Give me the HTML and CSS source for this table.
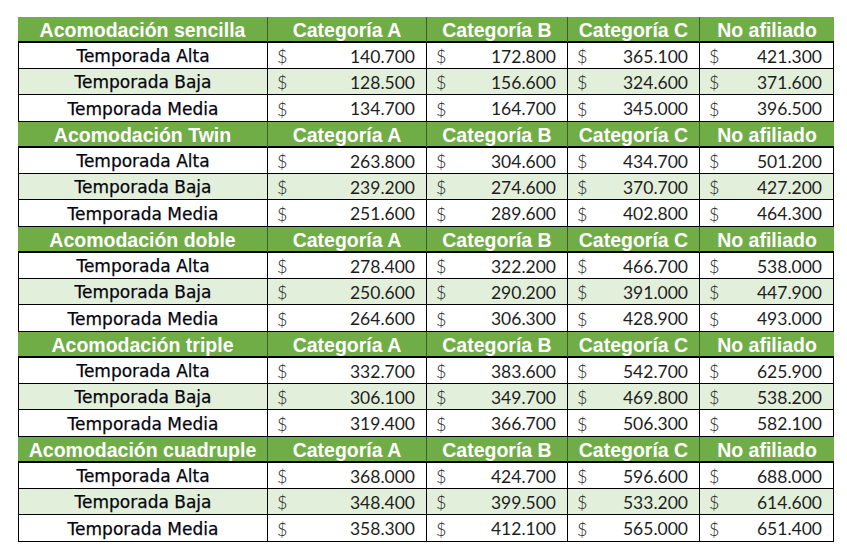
FILE: index.html
```html
<!DOCTYPE html>
<html lang="es">
<head>
<meta charset="utf-8">
<title>Tarifas de acomodación</title>
<link rel="stylesheet" href="styles.css">
</head>
<body>
<div class="sheet">
  <section class="group">
    <div class="row head"><div class="c">Acomodación sencilla</div><div class="c">Categoría A</div><div class="c">Categoría B</div><div class="c">Categoría C</div><div class="c">No afiliado</div></div>
    <div class="row"><div class="c label">Temporada Alta</div><div class="c money"><span class="cur">$</span><span>140.700</span></div><div class="c money"><span class="cur">$</span><span>172.800</span></div><div class="c money"><span class="cur">$</span><span>365.100</span></div><div class="c money"><span class="cur">$</span><span>421.300</span></div></div>
    <div class="row alt"><div class="c label">Temporada Baja</div><div class="c money"><span class="cur">$</span><span>128.500</span></div><div class="c money"><span class="cur">$</span><span>156.600</span></div><div class="c money"><span class="cur">$</span><span>324.600</span></div><div class="c money"><span class="cur">$</span><span>371.600</span></div></div>
    <div class="row tall"><div class="c label">Temporada Media</div><div class="c money"><span class="cur">$</span><span>134.700</span></div><div class="c money"><span class="cur">$</span><span>164.700</span></div><div class="c money"><span class="cur">$</span><span>345.000</span></div><div class="c money"><span class="cur">$</span><span>396.500</span></div></div>
  </section>
  <section class="group">
    <div class="row head"><div class="c">Acomodación Twin</div><div class="c">Categoría A</div><div class="c">Categoría B</div><div class="c">Categoría C</div><div class="c">No afiliado</div></div>
    <div class="row"><div class="c label">Temporada Alta</div><div class="c money"><span class="cur">$</span><span>263.800</span></div><div class="c money"><span class="cur">$</span><span>304.600</span></div><div class="c money"><span class="cur">$</span><span>434.700</span></div><div class="c money"><span class="cur">$</span><span>501.200</span></div></div>
    <div class="row alt"><div class="c label">Temporada Baja</div><div class="c money"><span class="cur">$</span><span>239.200</span></div><div class="c money"><span class="cur">$</span><span>274.600</span></div><div class="c money"><span class="cur">$</span><span>370.700</span></div><div class="c money"><span class="cur">$</span><span>427.200</span></div></div>
    <div class="row tall"><div class="c label">Temporada Media</div><div class="c money"><span class="cur">$</span><span>251.600</span></div><div class="c money"><span class="cur">$</span><span>289.600</span></div><div class="c money"><span class="cur">$</span><span>402.800</span></div><div class="c money"><span class="cur">$</span><span>464.300</span></div></div>
  </section>
  <section class="group">
    <div class="row head"><div class="c">Acomodación doble</div><div class="c">Categoría A</div><div class="c">Categoría B</div><div class="c">Categoría C</div><div class="c">No afiliado</div></div>
    <div class="row"><div class="c label">Temporada Alta</div><div class="c money"><span class="cur">$</span><span>278.400</span></div><div class="c money"><span class="cur">$</span><span>322.200</span></div><div class="c money"><span class="cur">$</span><span>466.700</span></div><div class="c money"><span class="cur">$</span><span>538.000</span></div></div>
    <div class="row alt"><div class="c label">Temporada Baja</div><div class="c money"><span class="cur">$</span><span>250.600</span></div><div class="c money"><span class="cur">$</span><span>290.200</span></div><div class="c money"><span class="cur">$</span><span>391.000</span></div><div class="c money"><span class="cur">$</span><span>447.900</span></div></div>
    <div class="row tall"><div class="c label">Temporada Media</div><div class="c money"><span class="cur">$</span><span>264.600</span></div><div class="c money"><span class="cur">$</span><span>306.300</span></div><div class="c money"><span class="cur">$</span><span>428.900</span></div><div class="c money"><span class="cur">$</span><span>493.000</span></div></div>
  </section>
  <section class="group">
    <div class="row head"><div class="c">Acomodación triple</div><div class="c">Categoría A</div><div class="c">Categoría B</div><div class="c">Categoría C</div><div class="c">No afiliado</div></div>
    <div class="row"><div class="c label">Temporada Alta</div><div class="c money"><span class="cur">$</span><span>332.700</span></div><div class="c money"><span class="cur">$</span><span>383.600</span></div><div class="c money"><span class="cur">$</span><span>542.700</span></div><div class="c money"><span class="cur">$</span><span>625.900</span></div></div>
    <div class="row alt"><div class="c label">Temporada Baja</div><div class="c money"><span class="cur">$</span><span>306.100</span></div><div class="c money"><span class="cur">$</span><span>349.700</span></div><div class="c money"><span class="cur">$</span><span>469.800</span></div><div class="c money"><span class="cur">$</span><span>538.200</span></div></div>
    <div class="row tall"><div class="c label">Temporada Media</div><div class="c money"><span class="cur">$</span><span>319.400</span></div><div class="c money"><span class="cur">$</span><span>366.700</span></div><div class="c money"><span class="cur">$</span><span>506.300</span></div><div class="c money"><span class="cur">$</span><span>582.100</span></div></div>
  </section>
  <section class="group">
    <div class="row head"><div class="c">Acomodación cuadruple</div><div class="c">Categoría A</div><div class="c">Categoría B</div><div class="c">Categoría C</div><div class="c">No afiliado</div></div>
    <div class="row"><div class="c label">Temporada Alta</div><div class="c money"><span class="cur">$</span><span>368.000</span></div><div class="c money"><span class="cur">$</span><span>424.700</span></div><div class="c money"><span class="cur">$</span><span>596.600</span></div><div class="c money"><span class="cur">$</span><span>688.000</span></div></div>
    <div class="row alt"><div class="c label">Temporada Baja</div><div class="c money"><span class="cur">$</span><span>348.400</span></div><div class="c money"><span class="cur">$</span><span>399.500</span></div><div class="c money"><span class="cur">$</span><span>533.200</span></div><div class="c money"><span class="cur">$</span><span>614.600</span></div></div>
    <div class="row tall"><div class="c label">Temporada Media</div><div class="c money"><span class="cur">$</span><span>358.300</span></div><div class="c money"><span class="cur">$</span><span>412.100</span></div><div class="c money"><span class="cur">$</span><span>565.000</span></div><div class="c money"><span class="cur">$</span><span>651.400</span></div></div>
  </section>
</div>
</body>
</html>
```
FILE: styles.css
```css
* { box-sizing: border-box; }
html, body { margin: 0; padding: 0; background: #fff; }
body { padding: 17px 0 0 18px; }

.sheet { width: 816px; }

.row {
  display: grid;
  grid-template-columns: 249px 159px 141px 132px 133px;
  height: 26px;
  border-left: 1px solid #000;
  border-right: 1px solid #000;
  border-bottom: 1px solid #000;
  background: #fff;
}
.row.tall { height: 27px; }
.row.alt { background: #e2efda; }

.c {
  border-right: 1px solid #000;
  display: flex;
  align-items: center;
  min-width: 0;
  white-space: nowrap;
}
.c:last-child { border-right: 0; }

.row.head {
  grid-template-columns: 250px 159px 141px 132px 134px;
  background: #70ad47;
  border-left: 0;
  border-right: 0;
  border-bottom: 2px solid #000;
}
.row.head .c {
  justify-content: center;
  color: #fff;
  font-family: "Liberation Sans", Arial, sans-serif;
  font-weight: bold;
  font-size: 19.5px;
  border-right-color: #3f5f2a;
  padding-top: 2px;
}

.label {
  justify-content: center;
  font-family: "DejaVu Sans", Verdana, sans-serif;
  font-size: 17px;
  color: #05050f;
  -webkit-text-stroke: 0.25px #05050f;
  padding-top: 1px;
}

.money {
  justify-content: space-between;
  font-family: Lato, "Liberation Sans", sans-serif;
  font-size: 17.5px;
  color: #1e1e1e;
  padding: 1px 11px 0 9px;
}
.cur { font-weight: 300; font-size: 18px; }
```
